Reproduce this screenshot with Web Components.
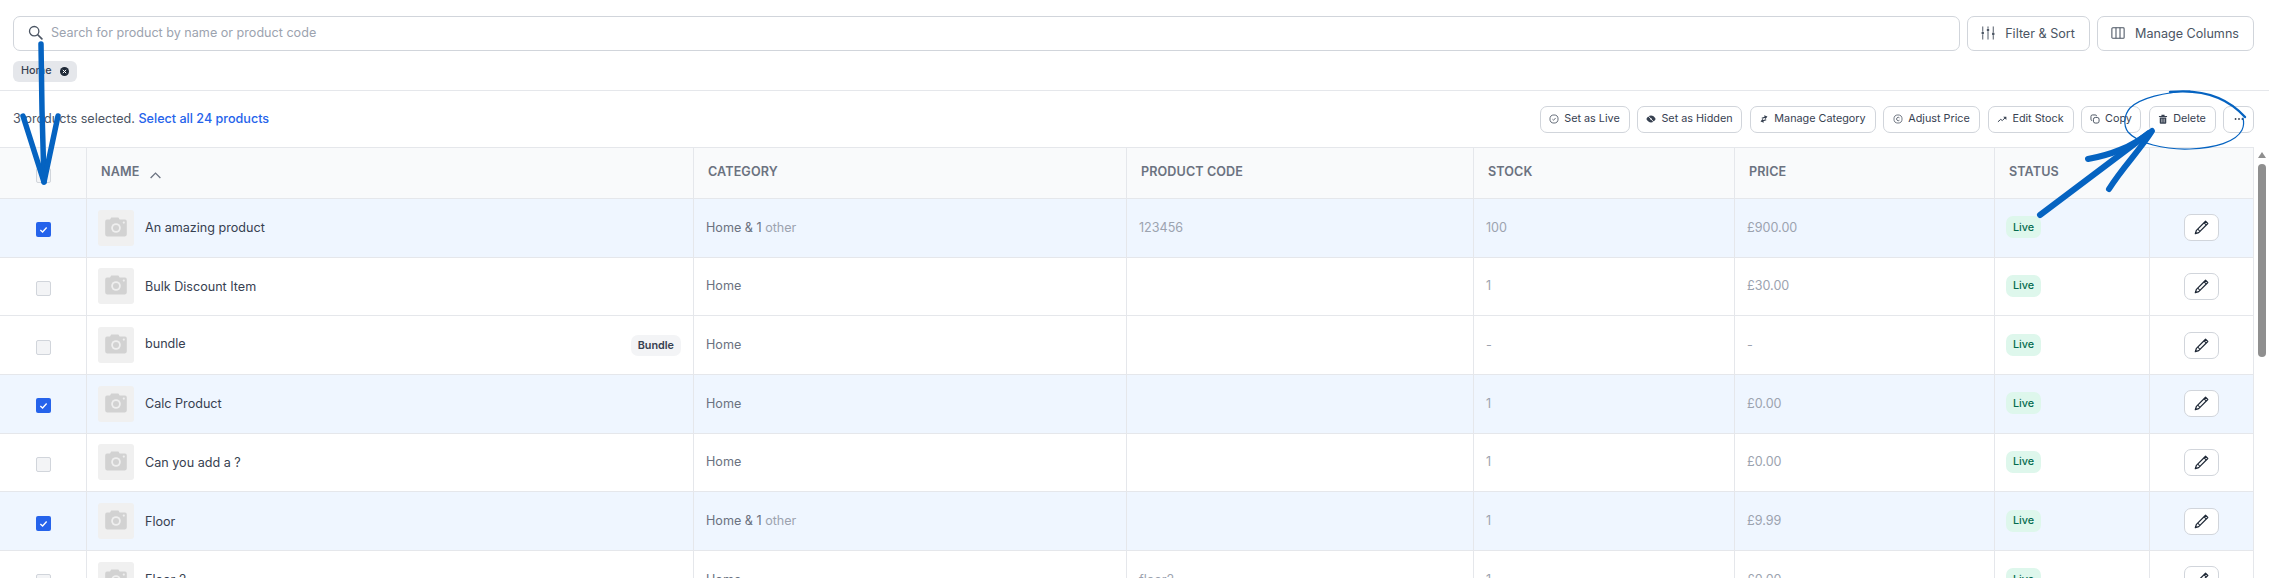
<!DOCTYPE html>
<html>
<head>
<meta charset="utf-8">
<title>Products</title>
<style>
html, body { margin: 0; padding: 0; height: 100%; overflow: hidden; background: #fff; }
body { font-family: Inter, "Liberation Sans", sans-serif; color: #374151; }
</style>
</head>
<body>
<products-page></products-page>

<script>
const ICONS = {
    search: '<circle cx="6.6" cy="6.6" r="5" fill="none" stroke="currentColor" stroke-width="1.4"/><path d="M10.4 10.4l4.4 4.4" stroke="currentColor" stroke-width="1.8" stroke-linecap="round"/>',
    sliders: '<path d="M2 1v5M2 10v5M8 1v1.500M8 6.500V15M14 1v6M14 11v4" stroke="currentColor" stroke-width="1.100" stroke-linecap="round"/><circle cx="2" cy="8" r="1.500" fill="currentColor"/><circle cx="8" cy="4.500" r="1.500" fill="currentColor"/><circle cx="14" cy="9" r="1.500" fill="currentColor"/>',
    columns: '<rect x="1" y="2" width="14" height="12" rx="1" fill="none" stroke="currentColor" stroke-width="1.200"/><path d="M5.700 2v12M10.300 2v12" stroke="currentColor" stroke-width="1.200"/>',
    check: '<circle cx="8" cy="8" r="6.500" fill="none" stroke="currentColor" stroke-width="1.200"/><path d="M5.500 8.300l1.800 1.700 3.300-3.700" fill="none" stroke="currentColor" stroke-width="1.200"/>',
    hidden: '<path d="M.5 8c2-3.800 4.600-5.500 7.500-5.500s5.500 1.700 7.500 5.500c-2 3.800-4.600 5.500-7.500 5.500S2.500 11.800.5 8z" fill="currentColor"/><circle cx="8" cy="8" r="1.300" fill="#fff"/><path d="M2.500 2l11 12" stroke="#fff" stroke-width="1.400"/>',
    swap: '<g transform="rotate(-18 8 8)"><path d="M5 4.800h5V2.400l4.500 3.400L10 9.200V6.800H5zM11 11.200H6v2.400L1.500 10.200 6 6.800v2.400h5z" fill="currentColor"/></g>',
    pound: '<circle cx="8" cy="8" r="6.500" fill="none" stroke="currentColor" stroke-width="1.100"/><path d="M10.300 6.100A2.700 2.700 0 1 0 10.300 9.900" fill="none" stroke="currentColor" stroke-width="1.200"/>',
    trend: '<path d="M1.500 12.500l4.500-4 2.500 2 4.500-4.500" fill="none" stroke="currentColor" stroke-width="1.600"/><path d="M10 4.500h5V9.500z" fill="currentColor"/>',
    copy: '<rect x="5.500" y="5.500" width="9" height="9" rx="3" fill="none" stroke="currentColor" stroke-width="1.400"/><path d="M3.500 10.500A2 2 0 0 1 1.500 8.500V4A2.500 2.500 0 0 1 4 1.500h4.500a2 2 0 0 1 2 2" fill="none" stroke="currentColor" stroke-width="1.400"/>',
    trash: '<path d="M1.500 3h13v1.600h-13zM5.500 1h5v2h-5z" fill="currentColor"/><path d="M2.800 5.500h10.400V14a1.500 1.500 0 0 1-1.500 1.500H4.300A1.500 1.500 0 0 1 2.800 14z" fill="currentColor"/><path d="M6.200 7.500v6M9.800 7.500v6" stroke="#fff" stroke-width="1.100"/>',
    dots: '<circle cx="2.500" cy="8" r="1.500" fill="currentColor"/><circle cx="8" cy="8" r="1.500" fill="currentColor"/><circle cx="13.500" cy="8" r="1.500" fill="currentColor"/>',
    pencil: '<path d="M12.300 1.300l2.400 2.400L5 13.400l-3.600 1.200 1.200-3.600z" fill="none" stroke="currentColor" stroke-width="1.300" stroke-linejoin="round"/><path d="M4 9.700l2.300 2.300M10.700 3l2.300 2.300" stroke="currentColor" stroke-width="1.100"/>',
    chevron: '<path d="M2 11l6-6 6 6" fill="none" stroke="currentColor" stroke-width="1.600"/>',
    camera: '<path d="M1 4.500A1.500 1.500 0 0 1 2.500 3H5l1-1.800h6L13 3h4.500A1.500 1.500 0 0 1 19 4.500v11a1.500 1.500 0 0 1-1.500 1.500h-15A1.500 1.500 0 0 1 1 15.500z" fill="#d2d2d2"/><circle cx="10" cy="10" r="4" fill="#efefef"/><circle cx="10" cy="10" r="2.500" fill="#d2d2d2"/><circle cx="16.500" cy="5.500" r=".9" fill="#efefef"/>'
};

function icon(name, size, box = 16) {
    return `<svg width="${size}" height="${size}" viewBox="0 0 ${box} ${box}">${ICONS[name]}</svg>`;
}

class ToolButton extends HTMLElement {
    connectedCallback() {
        const size = this.getAttribute("size") || "small";
        const name = this.getAttribute("icon");
        this.attachShadow({ mode: "open" });
        this.shadowRoot.innerHTML = `
        <style>
            :host { display: block; }
            .btn {
                display: flex;
                align-items: center;
                justify-content: center;
                box-sizing: border-box;
                border: 1px solid #d1d5db;
                border-radius: 6px;
                background: #fff;
                white-space: nowrap;
            }
            .small { height: 27px; padding: 0 0 1px; gap: 5px; font-size: 10.8px; color: #374151; border-radius: 7px; }
            .large { height: 35px; padding: 0 1px 1px 0; gap: 10px; font-size: 12.6px; color: #4b5563; border-radius: 7px; }
            svg { flex: none; }
        </style>
        <div class="btn ${size}">${icon(name, size === "large" ? 14 : 10)}<slot></slot></div>`;
    }
}

class SearchBar extends HTMLElement {
    connectedCallback() {
        this.attachShadow({ mode: "open" });
        this.shadowRoot.innerHTML = `
        <style>
            :host { display: flex; gap: 7px; }
            .box {
                flex: 1;
                box-sizing: border-box;
                height: 35px;
                display: flex;
                align-items: center;
                gap: 8px;
                padding: 0 0 2px 14px;
                border: 1px solid #d1d5db;
                border-radius: 7px;
                font-size: 12.6px;
                color: #9ca3af;
            }
            .box svg { color: #4b5563; flex: none; }
        </style>
        <div class="box">${icon("search", 15)}<span>Search for product by name or product code</span></div>
        <tool-button size="large" icon="sliders" style="width:123px">Filter &amp; Sort</tool-button>
        <tool-button size="large" icon="columns" style="width:157px">Manage Columns</tool-button>`;
    }
}

class FilterChip extends HTMLElement {
    connectedCallback() {
        this.attachShadow({ mode: "open" });
        this.shadowRoot.innerHTML = `
        <style>
            :host {
                display: inline-flex;
                align-items: center;
                gap: 8px;
                height: 21px;
                padding: 0 8px 2px;
                box-sizing: border-box;
                border-radius: 6px;
                background: #e5e7eb;
                font-size: 10.8px;
                font-weight: 500;
                color: #374151;
            }
            i { display: flex; width: 9px; height: 9px; border-radius: 50%; background: #1f2937; align-items: center; justify-content: center; margin-top: 2px; }
        </style>
        <slot></slot>
        <i><svg width="5" height="5" viewBox="0 0 6 6"><path d="M1 1l4 4M5 1L1 5" stroke="#fff" stroke-width="1.200"/></svg></i>`;
    }
}

class SelectionBar extends HTMLElement {
    connectedCallback() {
        this.attachShadow({ mode: "open" });
        const actions = [
            ["check", "Set as Live", 90], ["hidden", "Set as Hidden", 105], ["swap", "Manage Category", 126],
            ["pound", "Adjust Price", 97], ["trend", "Edit Stock", 86], ["copy", "Copy", 60], ["trash", "Delete", 67]
        ];
        this.shadowRoot.innerHTML = `
        <style>
            :host {
                display: flex;
                align-items: center;
                justify-content: space-between;
                height: 57px;
                box-sizing: border-box;
                padding: 0 15px 0 13px;
                border-top: 1px solid #e5e7eb;
                font-size: 12.6px;
                color: #4b5563;
            }
            .count { padding-bottom: 2px; }
            .count b { font-weight: 500; color: #2563eb; }
            .actions { display: flex; gap: 7.5px; }
        </style>
        <div class="count">3 products selected. <b>Select all 24 products</b></div>
        <div class="actions">
            ${actions.map(([ic, label, w]) => `<tool-button icon="${ic}" style="width:${w}px">${label}</tool-button>`).join("")}
            <tool-button icon="dots" style="width:31px"></tool-button>
        </div>`;
    }
}

const COLUMNS = "87px 607px 433px 347px 261px 260px 155px 104px";

class TableHead extends HTMLElement {
    connectedCallback() {
        this.attachShadow({ mode: "open" });
        const titles = ["Category", "Product code", "Stock", "Price", "Status"];
        this.shadowRoot.innerHTML = `
        <style>
            :host {
                display: grid;
                grid-template-columns: ${COLUMNS};
                height: 52px;
                box-sizing: border-box;
                background: #f9fafb;
                border-top: 1px solid #e5e7eb;
                border-bottom: 1px solid #e5e7eb;
                font-size: 12.6px;
                font-weight: 600;
                color: #6b7280;
                text-transform: uppercase;
                letter-spacing: .1px;
            }
            div { display: flex; align-items: center; padding: 0 0 4px 14px; border-right: 1px solid #e5e7eb; }
            .pick { justify-content: center; padding: 4px 0 0; }
            .pick span { width: 13px; height: 13px; border: 1px solid #d1d5db; border-radius: 2px; background: #f3f4f6; }
            svg { margin: 8px 0 0 10px; }
        </style>
        <div class="pick"><span></span></div>
        <div>Name ${icon("chevron", 13)}</div>
        ${titles.map(t => `<div>${t}</div>`).join("")}
        <div></div>`;
    }
}

class ProductRow extends HTMLElement {
    connectedCallback() {
        this.attachShadow({ mode: "open" });
        const a = n => this.getAttribute(n) || "";
        const selected = this.hasAttribute("selected");
        const category = a("category").replace(" other", '&nbsp;<em>other</em>');
        this.shadowRoot.innerHTML = `
        <style>
            :host {
                display: grid;
                grid-template-columns: ${COLUMNS};
                height: 58.67px;
                box-sizing: border-box;
                border-bottom: 1px solid #e5e7eb;
                background: ${selected ? "#eff6ff" : "#fff"};
                font-size: 12.6px;
                color: #9ca3af;
            }
            .cell { display: flex; align-items: center; padding: 0 0 1px 12px; border-right: 1px solid #e5e7eb; min-width: 0; }
            .pick { justify-content: center; padding: 4px 0 0; }
            .box { width: 15px; height: 15px; box-sizing: border-box; border-radius: 2px; display: flex; align-items: center; justify-content: center; }
            .box.on { background: #2563eb; }
            .box.off { background: #f3f4f6; border: 1px solid #d1d5db; }
            .name { color: #374151; padding: 0 0 0 11px; }
            .thumb { width: 36px; height: 36px; margin-right: 11px; border-radius: 3px; background: #f0f0f0; display: flex; align-items: center; justify-content: center; flex: none; }
            .title.up { padding-bottom: 3px; }
            .badge { margin-left: auto; margin-right: 12px; height: 21px; padding: 0 7px; display: flex; align-items: center; border-radius: 7px; background: #f3f4f6; font-size: 10.8px; font-weight: 600; color: #374151; }
            .cat { color: #6b7280; }
            em { font-style: normal; color: #9ca3af; }
            .live { display: flex; align-items: center; height: 22px; padding: 0 7px; border-radius: 7px; background: #def7ec; color: #046c4e; font-size: 10.8px; font-weight: 500; margin: 0 0 0 -1px; }
            .edit { justify-content: center; padding: 0; }
            .pen { width: 35px; height: 27px; box-sizing: border-box; border: 1px solid #d1d5db; border-radius: 7px; background: #fff; display: flex; align-items: center; justify-content: center; color: #1f2937; }
        </style>
        <div class="cell pick">
            <div class="box ${selected ? "on" : "off"}">${selected ? '<svg width="9" height="9" viewBox="0 0 10 10"><path d="M1.500 5.500l2.500 2.300 4.500-5" fill="none" stroke="#fff" stroke-width="1.500"/></svg>' : ""}</div>
        </div>
        <div class="cell name">
            <div class="thumb">${icon("camera", 24, 20)}</div>
            <span class="title ${this.hasAttribute("bundle") ? "up" : ""}">${a("name")}</span>
            ${this.hasAttribute("bundle") ? '<span class="badge">Bundle</span>' : ""}
        </div>
        <div class="cell cat">${category}</div>
        <div class="cell">${a("code")}</div>
        <div class="cell">${a("stock")}</div>
        <div class="cell">${a("price")}</div>
        <div class="cell"><span class="live">Live</span></div>
        <div class="cell edit"><div class="pen">${icon("pencil", 15)}</div></div>`;
    }
}

class PageScrollbar extends HTMLElement {
    connectedCallback() {
        this.attachShadow({ mode: "open" });
        this.shadowRoot.innerHTML = `
        <style>
            :host { display: block; width: 15px; flex: none; background: #fff; }
            .up { width: 0; height: 0; margin: 5px auto 0; border: 4.5px solid transparent; border-top: 0; border-bottom: 6px solid #8f8f8f; }
            .thumb { width: 8px; height: 193px; margin: 6px auto 0; border-radius: 4px; background: #8f8f8f; }
        </style>
        <div class="up"></div>
        <div class="thumb"></div>`;
    }
}

class HandMarks extends HTMLElement {
    connectedCallback() {
        this.attachShadow({ mode: "open" });
        this.shadowRoot.innerHTML = `
        <style>
            :host { position: absolute; left: 0; top: 0; pointer-events: none; }
            svg { display: block; }
            path { fill: none; stroke: #0563c1; stroke-linecap: round; stroke-linejoin: round; }
        </style>
        <svg width="2269" height="578" viewBox="0 0 2269 578">
            <path d="M41 44L42 110L44 182" stroke-width="5.500"/>
            <path d="M23 116L44 182L58 116" stroke-width="5.500"/>
            <path d="M2040 215L2149 133" stroke-width="6"/>
            <path d="M2088 159C2110 155 2130 148 2152 131C2140 150 2122 168 2109 189" stroke-width="6"/>
            <path d="M2190 91C2165 92 2140 98 2130 108C2124 115 2123 125 2128 132C2137 143 2165 150 2190 149C2215 148 2236 142 2242 130C2244 126 2244 122 2243 118" stroke-width="1.200"/>
            <path d="M2170 92C2200 89 2226 96 2245 117" stroke-width="2.400"/>
        </svg>`;
    }
}

class ProductsPage extends HTMLElement {
    connectedCallback() {
        this.attachShadow({ mode: "open" });
        const rows = [
            { name: "An amazing product", category: "Home &amp; 1 other", code: "123456", stock: "100", price: "£900.00", selected: 1 },
            { name: "Bulk Discount Item", category: "Home", stock: "1", price: "£30.00" },
            { name: "bundle", category: "Home", stock: "-", price: "-", bundle: 1 },
            { name: "Calc Product", category: "Home", stock: "1", price: "£0.00", selected: 1 },
            { name: "Can you add a ?", category: "Home", stock: "1", price: "£0.00" },
            { name: "Floor", category: "Home &amp; 1 other", stock: "1", price: "£9.99", selected: 1 },
            { name: "Floor 2", category: "Home", code: "floor2", stock: "1", price: "£0.00" }
        ];
        const attr = r => Object.entries(r).map(([k, v]) => `${k}="${v}"`).join(" ");
        this.shadowRoot.innerHTML = `
        <style>
            :host { display: block; position: relative; width: 2269px; height: 578px; overflow: hidden; }
            .top { padding: 16px 15px 11px 13px; }
            .chips { margin-top: 7px; height: 21px; }
            .main { display: flex; height: 431px; overflow: hidden; }
            .table { width: 2254px; flex: none; }
        </style>
        <div class="top">
            <search-bar></search-bar>
            <div class="chips"><filter-chip>Home</filter-chip></div>
        </div>
        <selection-bar></selection-bar>
        <div class="main">
            <div class="table">
                <table-head></table-head>
                ${rows.map(r => `<product-row ${attr(r)}></product-row>`).join("")}
            </div>
            <page-scrollbar></page-scrollbar>
        </div>
        <hand-marks></hand-marks>`;
    }
}

customElements.define("tool-button", ToolButton);
customElements.define("search-bar", SearchBar);
customElements.define("filter-chip", FilterChip);
customElements.define("selection-bar", SelectionBar);
customElements.define("table-head", TableHead);
customElements.define("product-row", ProductRow);
customElements.define("page-scrollbar", PageScrollbar);
customElements.define("hand-marks", HandMarks);
customElements.define("products-page", ProductsPage);
</script>
</body>
</html>
